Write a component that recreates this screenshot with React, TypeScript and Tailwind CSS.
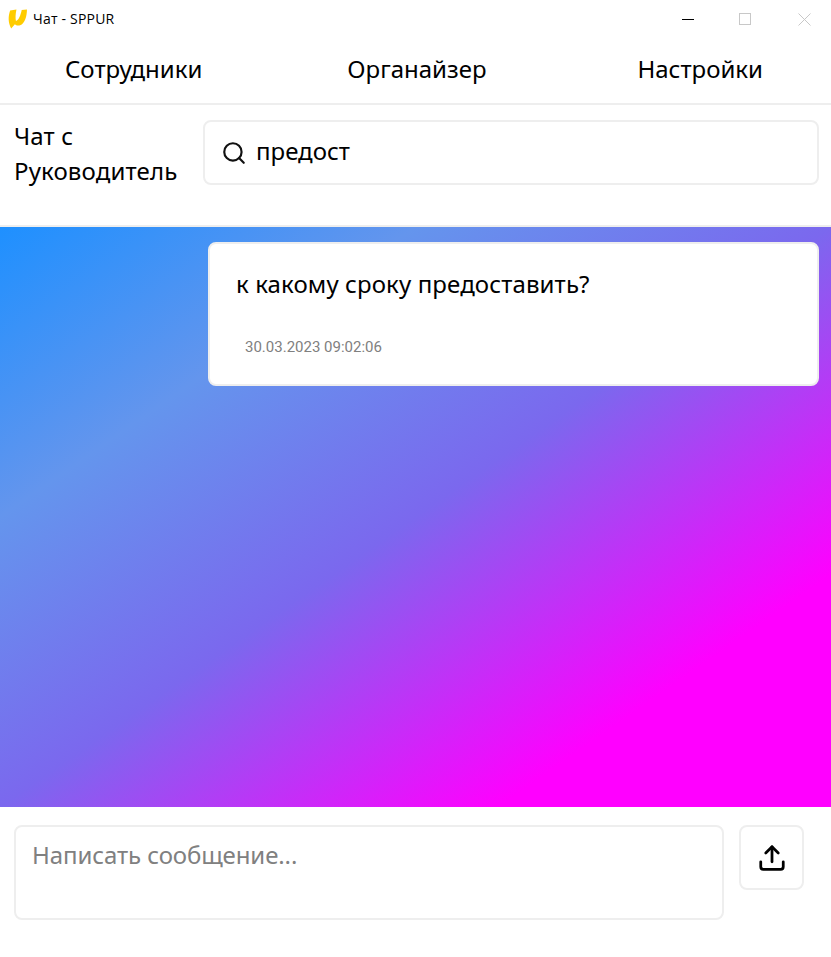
import { Search, Upload } from "lucide-react";

const font = { fontFamily: '"Noto Sans", sans-serif' };

const App = () => {
  return (
    <div className="w-[831px] h-[957px] bg-white flex flex-col overflow-hidden text-black" style={font}>
      {/* title bar */}
      <div className="h-[38px] flex items-center shrink-0">
        <svg width="21" height="21" viewBox="0 0 20 20" className="ml-[7px]">
          <path d="M3 1.5 L9 0.5 C8 5 8 9 8.5 11.5 C11 11 13 6 14 1 L19 0.5 C19 7 17 14 12.5 15.5 C10 16 8.5 15.5 7.5 14.5 L4 18.5 C1 13 1 7 3 1.5 Z" fill="#ffcc00" />
        </svg>
        <span className="ml-[5px] text-[14px] leading-none tracking-[0.2px]" style={{ fontFamily: '"Open Sans", sans-serif' }}>Чат - SPPUR</span>
        <div className="ml-auto flex items-center h-full">
          <div className="w-[57px] flex justify-center"><div className="w-[12px] h-px bg-black" /></div>
          <div className="w-[58px] flex justify-center"><div className="w-[12px] h-[12px] border border-[#c8c8c8]" /></div>
          <div className="w-[57px] flex justify-center">
            <svg width="13" height="13" viewBox="0 0 13 13" stroke="#c8c8c8" fill="none" className="ml-[3px]"><path d="M0.5 0.5 L12.5 12.5 M12.5 0.5 L0.5 12.5" /></svg>
          </div>
        </div>
      </div>

      {/* nav */}
      <div className="h-[67px] shrink-0 border-b-2 border-[#eeeeee] flex items-center text-[24px] pb-[4px]">
        <span className="ml-[65px]">Сотрудники</span>
        <span className="ml-[145px]">Органайзер</span>
        <span className="ml-auto mr-[68px]">Настройки</span>
      </div>

      {/* chat header */}
      <div className="h-[122px] shrink-0 border-b-2 border-[#eeeeee] flex items-start pt-[13px]">
        <div className="w-[203px] pl-[14px] text-[24px] leading-[35px] tracking-[0.15px]">
          <div>Чат с</div>
          <div>Руководитель</div>
        </div>
        <div className="w-[616px] h-[65px] mt-[2px] border-2 border-[#eeeeee] rounded-[8px] flex items-center pl-[16px]">
          <Search size={26} strokeWidth={2} className="text-[#111]" />
          <span className="ml-[9px] text-[24px] pb-[4px]">предост</span>
        </div>
      </div>

      {/* messages */}
      <div className="h-[580px] shrink-0 flex flex-col items-end pr-[12px] pt-[15px] bg-[linear-gradient(to_bottom_right,#1e90ff_0%,#6495ed_25%,#7b68ee_50%,#ff00ff_80%)]">
        <div className="w-[611px] h-[144px] bg-white border-2 border-[#eeeeee] rounded-[8px] pl-[26px] pt-[22px]">
          <div className="text-[24px] leading-[36px] tracking-[0.12px]">к какому сроку предоставить?</div>
          <div className="mt-[34px] ml-[9px] text-[15px] leading-[22px] text-[#808080]" style={{ fontFamily: "Roboto, sans-serif" }}>30.03.2023 09:02:06</div>
        </div>
      </div>

      {/* footer */}
      <div className="flex items-start pt-[18px] pl-[14px]">
        <div className="w-[710px] h-[95px] border-2 border-[#eeeeee] rounded-[8px] pl-[16px] pt-[10px] text-[24px] leading-[36px] text-[#808080] tracking-[-0.1px]">
          Написать сообщение...
        </div>
        <div className="ml-[15px] w-[65px] h-[65px] border-2 border-[#eeeeee] rounded-[8px] flex items-center justify-center">
          <Upload size={30} strokeWidth={2.2} />
        </div>
      </div>
    </div>
  );
};

export default App;
